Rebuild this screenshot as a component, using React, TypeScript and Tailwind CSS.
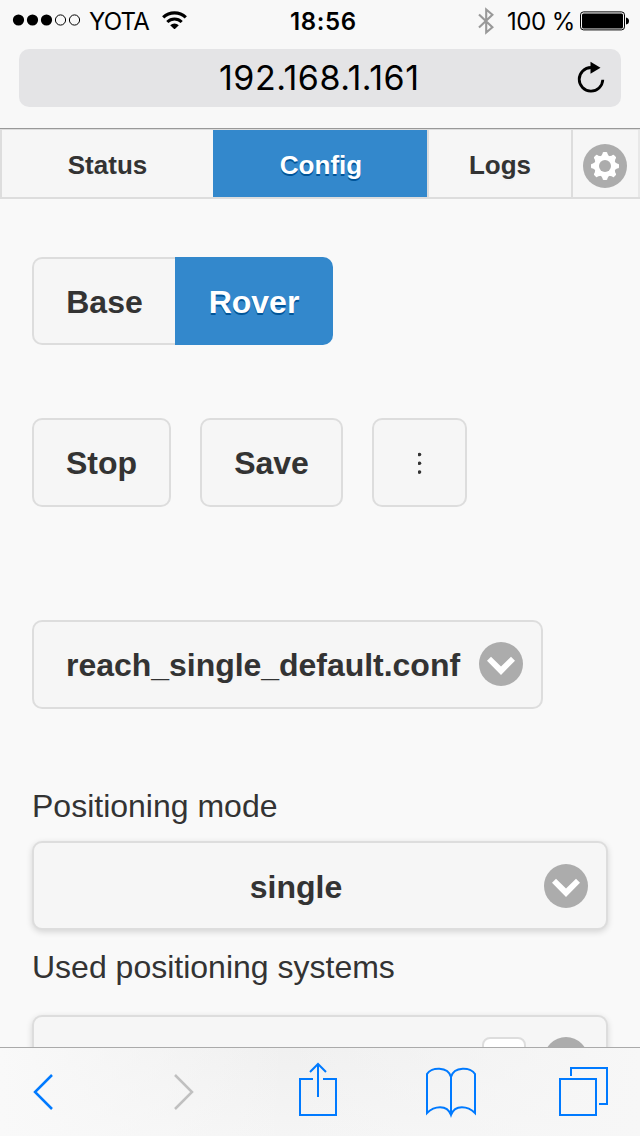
import React from "react";

const helv = "font-['Liberation_Sans',Arial,sans-serif]";

function ArrowBadge({ className = "" }: { className?: string }) {
  return (
    <svg className={`size-11 shrink-0 ${className}`} viewBox="0 0 44 44">
      <circle cx="22" cy="22" r="22" fill="#acacac" />
      <path d="M12 14.7 L8 18.7 L22 33 L36 18.7 L32 14.7 L22 24.6 Z" fill="#fff" />
    </svg>
  );
}

function GearBadge() {
  return (
    <svg className="size-11 shrink-0" viewBox="-22 -22 44 44">
      <circle r="22" fill="#acacac" />
      <g fill="#fff">
        {[0, 45, 90, 135].map((a) => (
          <path key={a} transform={`rotate(${a})`} d="M-4.2 -9.5 L-2.6 -12 Q-2.4 -14 -1.4 -14 H1.4 Q2.4 -14 2.6 -12 L4.2 -9.5 V9.5 L2.6 12 Q2.4 14 1.4 14 H-1.4 Q-2.4 14 -2.6 12 L-4.2 9.5 Z" />
        ))}
        <circle r="10.6" />
      </g>
      <circle r="6" fill="#acacac" />
    </svg>
  );
}

function StatusBar() {
  return (
    <div className="flex h-[41px] items-center font-['Inter',sans-serif] text-black">
      <svg className="mb-px ml-3 h-3 w-[70px] shrink-0" viewBox="0 0 70 12">
        {[6.5, 20.5, 34.5].map((x) => (
          <circle key={x} cx={x} cy="6" r="5.6" />
        ))}
        {[48.5, 62.5].map((x) => (
          <circle key={x} cx={x} cy="6" r="5.1" fill="none" stroke="#000" />
        ))}
      </svg>
      <span className="ml-[7px] w-[61px] shrink-0 pt-px text-[24px] leading-[41px] tracking-[-0.8px]">YOTA</span>
      <svg className="mb-px ml-3 h-[18px] w-[25px] shrink-0" viewBox="0 0 25 18" fill="none" stroke="#000" strokeWidth="3.2">
        <path d="M1.2 6.4 A16.4 16.4 0 0 1 23.8 6.4" />
        <path d="M5.3 11 A10.2 10.2 0 0 1 19.7 11" strokeWidth="3" />
        <path d="M8.2 14.2 A6 6 0 0 1 16.8 14.2 L12.5 18.4 Z" fill="#000" stroke="none" />
      </svg>
      <span className="ml-[103px] w-[68px] shrink-0 pt-px text-[24px] leading-[41px] font-semibold tracking-[0.6px] whitespace-nowrap">18:56</span>
      <svg className="ml-[120px] h-7 w-4 shrink-0" viewBox="0 0 16 28" fill="none" stroke="#999" strokeWidth="2.1">
        <path d="M1 7.5 L14.4 20.3 L8.2 25.5 V2.5 L14.4 7.7 L1 20.5" />
      </svg>
      <span className="ml-[13px] w-[68px] shrink-0 pt-px text-[24px] leading-[41px] tracking-[-0.5px] whitespace-nowrap">100 %</span>
      <svg className="ml-[5px] h-5 w-[50px] shrink-0" viewBox="0 0 50 20">
        <rect x="0.5" y="0.9" width="44" height="18" rx="3" fill="none" stroke="#000" />
        <rect x="2" y="2.4" width="41" height="15" rx="1.5" />
        <path d="M46 6.5 Q49 7 49 10 Q49 13 46 13.5 Z" />
      </svg>
    </div>
  );
}

function Header() {
  return (
    <header className="h-[129px] shrink-0 border-b border-[#999] bg-[#f8f8f8]">
      <StatusBar />
      <div className="mx-[19px] mt-2 flex h-[58px] items-center rounded-[10px] bg-[#e4e4e6] font-['Inter',sans-serif]">
        <span className="ml-[200px] w-[200px] text-[34px] leading-[56px] tracking-[0.5px] whitespace-nowrap text-black">192.168.1.161</span>
        <svg className="mb-[2px] ml-[158px] h-8 w-7" viewBox="0 0 28 32">
          <path d="M14 6.5 A11.8 11.8 0 1 0 25.8 18.8" fill="none" stroke="#000" strokeWidth="2.8" />
          <path d="M13.5 0.8 L23.5 6.8 L13.5 12.8 Z" />
        </svg>
      </div>
    </header>
  );
}

const onShadow = "[text-shadow:0_2px_0_#005599]";
const offShadow = "[text-shadow:0_2px_0_#f3f3f3]";

function Tabs() {
  return (
    <nav className={`flex h-[70px] shrink-0 border-t border-b-2 border-[#ddd] bg-[#f6f6f6] text-[26px] leading-[70px] font-bold text-[#333] ${helv}`}>
      <div className={`w-[213px] border-l-2 border-[#ddd] text-center ${offShadow}`}>Status</div>
      <div className={`w-[214px] bg-[#3388cc] pl-0.5 text-center text-white ${onShadow}`}>Config</div>
      <div className={`w-[146px] border-x-2 border-[#ddd] text-center ${offShadow}`}>Logs</div>
      <div className="flex w-[67px] items-center border-r-2 border-[#e8e8e8] pt-1 pl-[10px]">
        <GearBadge />
      </div>
    </nav>
  );
}

const button = "rounded-[10px] border-2 border-[#ddd] bg-[#f6f6f6] text-center [text-shadow:0_2px_0_#f3f3f3]";

function Settings() {
  return (
    <main className={`min-h-0 flex-1 overflow-hidden px-8 pt-[58px] text-[32px] text-[#333] ${helv}`}>
      <div className="flex h-[88px] leading-[86px] font-bold">
        <div className={`w-[143px] rounded-l-[10px] border-2 border-r-0 border-[#ddd] bg-[#f6f6f6] text-center ${offShadow}`}>Base</div>
        <div className={`w-[158px] rounded-r-[10px] bg-[#3388cc] pt-0.5 text-center text-white ${onShadow}`}>Rover</div>
      </div>
      <div className="mt-[73px] flex h-[89px] leading-[86px] font-bold">
        <div className={`w-[139px] ${button}`}>Stop</div>
        <div className={`ml-[29px] w-[143px] ${button}`}>Save</div>
        <div className={`ml-[29px] flex w-[95px] items-center justify-center ${button}`}>
          <svg className="h-6 w-1" viewBox="0 0 4 24" fill="#333">
            <circle cx="1.5" cy="3.5" r="1.8" />
            <circle cx="1.5" cy="12.3" r="1.8" />
            <circle cx="1.5" cy="21.1" r="1.8" />
          </svg>
        </div>
      </div>
      <div className={`mt-[113px] flex h-[89px] w-[511px] items-center justify-between pr-[18px] pl-8 font-bold ${button}`}>
        <span className="leading-[86px] tracking-[-0.03px]">reach_single_default.conf</span>
        <ArrowBadge className="mb-[2px]" />
      </div>
      <div className="mt-[76px] h-[42px] leading-[42px]">Positioning mode</div>
      <div className={`mt-[14px] flex h-[89px] items-center pr-[18px] font-bold shadow-[0_2px_6px_rgba(0,0,0,0.15)] ${button}`}>
        <span className="ml-[60px] flex-1 pt-0.5 pr-[46px] leading-[84px]">single</span>
        <ArrowBadge />
      </div>
      <div className="mt-[16px] h-[42px] leading-[42px]">Used positioning systems</div>
      <div className={`mt-[27px] flex h-[89px] items-start justify-end pt-5 pr-[18px] shadow-[0_2px_6px_rgba(0,0,0,0.15)] ${button}`}>
        <div className="mr-[18px] h-11 w-11 rounded-[8px] border-2 border-[#ddd] bg-white" />
        <ArrowBadge />
      </div>
    </main>
  );
}

function Toolbar() {
  return (
    <footer className="h-[89px] shrink-0 border-t border-[#aaa] bg-linear-to-b from-[#f0f0f0] to-[#f5f5f5]">
      <div className="h-full bg-linear-to-r from-[#f9f9f9] via-transparent via-45% to-[#f7f7f7]">
        <svg className="h-[88px] w-[640px]" viewBox="0 1048 640 88" fill="none" stroke="#007aff" strokeWidth="2">
          <path d="M52 1075 L35 1092 L52 1109" strokeWidth="2.5" />
          <path d="M175 1075 L192 1092 L175 1109" stroke="#c0c0c0" strokeWidth="2.5" />
          <path d="M313 1079 H300 V1115 H336 V1079 H323 M318 1097 V1065 M310 1072 L318 1064 L326 1072" />
          <path d="M451 1115 V1077 C448 1066 431 1067 427 1074 V1113 C434 1106 447 1104 451 1115 C455 1104 468 1106 475 1113 V1074 C471 1067 454 1066 451 1077" />
          <path d="M560 1079 H596 V1115 H560 Z M571 1076 V1068 H607 V1104 H599" />
        </svg>
      </div>
    </footer>
  );
}

export default function App() {
  return (
    <div className="flex h-[1136px] w-[640px] flex-col overflow-hidden bg-[#f9f9f9]">
      <Header />
      <Tabs />
      <Settings />
      <Toolbar />
    </div>
  );
}
